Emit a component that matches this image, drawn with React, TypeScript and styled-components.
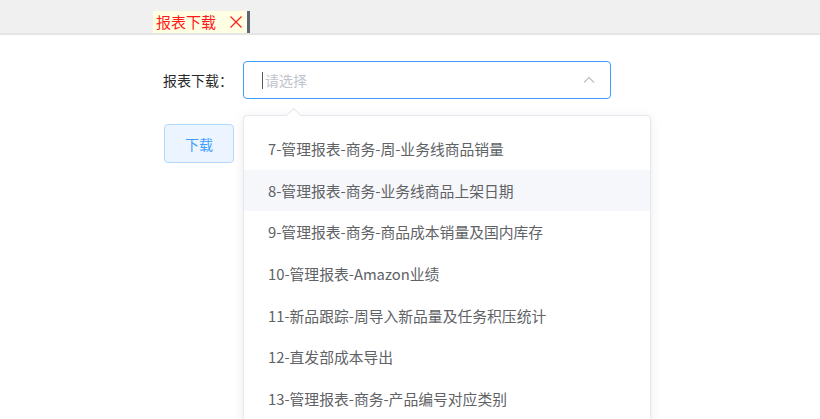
import React from "react";
import styled, { createGlobalStyle } from "styled-components";

const GlobalStyle = createGlobalStyle`
  html {
    overflow: hidden;
  }
  body {
    margin: 0;
    padding: 0;
    min-height: 100vh;
    background: #ffffff;
    font-family: "Noto Sans CJK SC", "Noto Sans", sans-serif;
  }
`;

const reports: string[] = [
  "7-管理报表-商务-周-业务线商品销量",
  "8-管理报表-商务-业务线商品上架日期",
  "9-管理报表-商务-商品成本销量及国内库存",
  "10-管理报表-Amazon业绩",
  "11-新品跟踪-周导入新品量及任务积压统计",
  "12-直发部成本导出",
  "13-管理报表-商务-产品编号对应类别",
];

const App = () => {
  return (
    <>
      <GlobalStyle />
      <TabBar>
        <Tab>
          <TabTitle>报表下载</TabTitle>
          <TabClose>
            <svg width="14" height="14" viewBox="0 0 14 14">
              <path
                d="M1.5 1.5 L12.5 12.5 M12.5 1.5 L1.5 12.5"
                stroke="#ff2020"
                strokeWidth="1.3"
                fill="none"
              />
            </svg>
          </TabClose>
        </Tab>
      </TabBar>
      <Content>
        <FormRow>
          <Label>报表下载：</Label>
          <SelectWrap>
            <SelectBox>
              <Caret />
              <Placeholder>请选择</Placeholder>
              <Arrow>
                <svg width="14" height="14" viewBox="0 0 14 14">
                  <path
                    d="M2 9.5 L7 4.5 L12 9.5"
                    stroke="#c0c4cc"
                    strokeWidth="1.4"
                    fill="none"
                  />
                </svg>
              </Arrow>
            </SelectBox>
            <Dropdown>
              <PopArrow />
              <List>
                {reports.map((txt, i) => (
                  <Item key={txt} hover={i === 1}>
                    {txt}
                  </Item>
                ))}
              </List>
            </Dropdown>
          </SelectWrap>
        </FormRow>
        <ButtonRow>
          <DownloadButton>下载</DownloadButton>
        </ButtonRow>
      </Content>
    </>
  );
};

export default App;

const TabBar = styled.div`
  height: 33px;
  background: #f0f0f0;
  border-bottom: 2px solid #e5e5e5;
  display: flex;
  align-items: flex-end;
  padding-left: 153px;
`;

const Tab = styled.div`
  height: 22px;
  display: flex;
  align-items: center;
  background: #ffffe3;
  border-right: 3px solid #5d6678;
  padding: 0 4px 0 3px;
`;

const TabTitle = styled.span`
  font-size: 15px;
  color: #ff1a1a;
  line-height: 22px;
`;

const TabClose = styled.span`
  display: flex;
  align-items: center;
  margin-left: 13px;
`;

const Content = styled.div`
  padding: 26px 0 0 163px;
`;

const FormRow = styled.div`
  display: flex;
  align-items: center;
`;

const Label = styled.div`
  width: 80px;
  font-size: 14px;
  color: #2a2a2a;
`;

const SelectWrap = styled.div`
  position: relative;
`;

const SelectBox = styled.div`
  width: 368px;
  height: 38px;
  box-sizing: border-box;
  border: 1px solid #409eff;
  border-radius: 4px;
  display: flex;
  align-items: center;
  padding-left: 18px;
  background: #fff;
`;

const Caret = styled.span`
  width: 1px;
  height: 17px;
  background: #555;
  margin-right: 2px;
`;

const Placeholder = styled.span`
  flex: 1;
  font-size: 14px;
  color: #c0c4cc;
`;

const Arrow = styled.span`
  display: flex;
  align-items: center;
  margin-right: 14px;
`;

const Dropdown = styled.div`
  position: absolute;
  top: 54px;
  left: 0;
  width: 408px;
  height: 320px;
  box-sizing: border-box;
  background: #fff;
  border: 1px solid #e4e7ed;
  border-radius: 4px;
  box-shadow: 0 2px 12px 0 rgba(0, 0, 0, 0.08);
  z-index: 10;
`;

const PopArrow = styled.span`
  position: absolute;
  top: -6px;
  left: 44px;
  width: 10px;
  height: 10px;
  background: #fff;
  border-top: 1px solid #e4e7ed;
  border-left: 1px solid #e4e7ed;
  transform: rotate(45deg);
`;

const List = styled.ul`
  list-style: none;
  margin: 0;
  padding: 12px 0 0;
`;

const Item = styled.li<{ hover?: boolean }>`
  height: 41.7px;
  line-height: 41.7px;
  padding-left: 24px;
  font-size: 14.8px;
  color: #606266;
  background: ${(p) => (p.hover ? "#f5f7fa" : "transparent")};
  white-space: nowrap;
`;

const ButtonRow = styled.div`
  margin-top: 25px;
`;

const DownloadButton = styled.button`
  width: 70px;
  height: 39px;
  margin-left: 1px;
  box-sizing: border-box;
  background: #ecf5ff;
  border: 1px solid #b3d8ff;
  border-radius: 4px;
  color: #409eff;
  font-size: 14px;
  font-family: "Noto Sans CJK SC", sans-serif;
  cursor: pointer;
`;
